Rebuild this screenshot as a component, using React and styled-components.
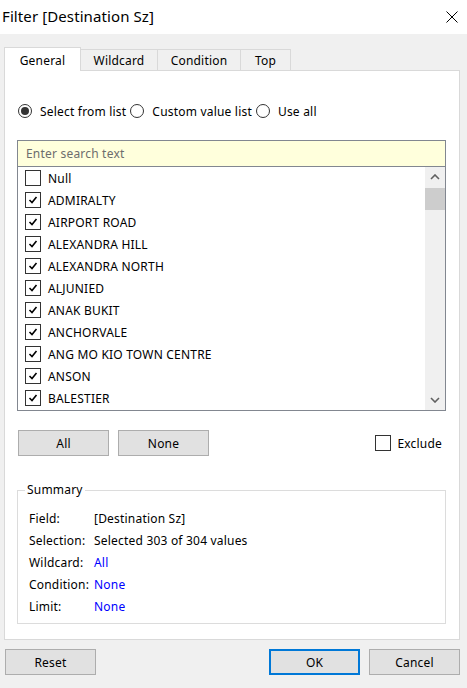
import React from "react";
import styled, { createGlobalStyle } from "styled-components";

const GlobalStyle = createGlobalStyle`
  html, body {
    margin: 0;
    padding: 0;
    background: #f0f0f0;
  }
  body {
    font-family: "Noto Sans", "Segoe UI", sans-serif;
    font-size: 12px;
    letter-spacing: 0.2px;
    color: #000;
  }
  * {
    box-sizing: border-box;
  }
`;

const Dialog = styled.div`
  width: 467px;
  height: 688px;
  display: flex;
  flex-direction: column;
  background: #f0f0f0;
  overflow: hidden;
`;

const TitleBar = styled.div`
  height: 34px;
  flex-shrink: 0;
  background: #fff;
  display: flex;
  align-items: center;
  justify-content: space-between;
  padding: 0 9px 0 2px;
`;

const Title = styled.div`
  font-size: 15px;
  letter-spacing: 0.1px;
  margin-top: -2px;
`;

const CloseButton = styled.div`
  width: 12px;
  height: 12px;
  display: flex;
`;

const TabRow = styled.div`
  display: flex;
  align-items: flex-end;
  height: 24px;
  margin: 13px 0 -1px 4px;
  position: relative;
  z-index: 1;
`;

const Tab = styled.div`
  width: ${({ $width }) => $width}px;
  height: ${({ $active }) => ($active ? 24 : 22)}px;
  margin-left: ${({ $first }) => ($first ? 0 : -1)}px;
  border: 1px solid #d9d9d9;
  border-bottom: ${({ $active }) => ($active ? "none" : "1px solid #d9d9d9")};
  background: ${({ $active }) => ($active ? "#fff" : "#f0f0f0")};
  display: flex;
  align-items: center;
  justify-content: center;
  padding-top: ${({ $active }) => ($active ? 1 : 0)}px;
  position: relative;
  z-index: ${({ $active }) => ($active ? 2 : 1)};
`;

const Panel = styled.div`
  width: 456px;
  height: 570px;
  flex-shrink: 0;
  margin-left: 4px;
  background: #fff;
  border: 1px solid #d9d9d9;
  padding: 29px 12px 0 12px;
  display: flex;
  flex-direction: column;
`;

const RadioRow = styled.div`
  display: flex;
  align-items: center;
  height: 22px;
`;

const RadioOption = styled.label`
  display: flex;
  align-items: center;
  gap: 8px;
  margin-right: 4px;
`;

const RadioCircle = styled.span`
  width: 14px;
  height: 14px;
  border-radius: 50%;
  border: 1px solid #333;
  display: flex;
  align-items: center;
  justify-content: center;
  margin-left: ${({ $first }) => ($first ? 1 : 0)}px;
  &::after {
    content: "";
    width: 8px;
    height: 8px;
    border-radius: 50%;
    background: ${({ $checked }) => ($checked ? "#333" : "transparent")};
  }
`;

const FilterBox = styled.div`
  width: 429px;
  margin-top: 18px;
  border: 1px solid #828790;
  display: flex;
  flex-direction: column;
`;

const SearchField = styled.div`
  height: 26px;
  background: #ffffdc;
  border-bottom: 1px solid #828790;
  color: #6d6d6d;
  padding-left: 8px;
  display: flex;
  align-items: center;
`;

const ListArea = styled.div`
  height: 243px;
  display: flex;
`;

const Rows = styled.div`
  flex: 1;
  overflow: hidden;
`;

const Row = styled.div`
  height: 22px;
  display: flex;
  align-items: center;
  padding-left: 7px;
  gap: 7px;
`;

const Box = styled.span`
  width: 16px;
  height: 16px;
  border: 1px solid #333;
  background: #fff;
  display: flex;
  align-items: center;
  justify-content: center;
  flex-shrink: 0;
`;

const Scrollbar = styled.div`
  width: 20px;
  background: #f0f0f0;
  display: flex;
  flex-direction: column;
  align-items: center;
`;

const ScrollArrow = styled.div`
  height: 20px;
  width: 100%;
  display: flex;
  align-items: center;
  justify-content: center;
`;

const Thumb = styled.div`
  width: 100%;
  height: 22px;
  margin-top: 1px;
  background: #cdcdcd;
`;

const Track = styled.div`
  flex: 1;
`;

const ActionRow = styled.div`
  display: flex;
  align-items: center;
  margin-top: 19px;
  padding-left: 1px;
  gap: 9px;
`;

const Button = styled.div`
  width: 91px;
  height: 26px;
  background: #e1e1e1;
  border: ${({ $default }) =>
    $default ? "2px solid #0078d7" : "1px solid #adadad"};
  display: flex;
  align-items: center;
  justify-content: center;
`;

const ExcludeOption = styled.label`
  margin-left: auto;
  margin-right: 5px;
  display: flex;
  align-items: center;
  gap: 6px;
`;

const Summary = styled.fieldset`
  margin: 26px 0 0 0;
  width: 429px;
  border: 1px solid #dcdcdc;
  padding: 9px 11px 6px 11px;
`;

const Legend = styled.legend`
  padding: 0 2px;
  margin-left: -4px;
  line-height: 16px;
`;

const SummaryRow = styled.div`
  display: grid;
  grid-template-columns: 65px 1fr;
  height: 22px;
  align-items: center;
`;

const Value = styled.span`
  color: ${({ $link }) => ($link ? "#0000ff" : "#000")};
`;

const Footer = styled.div`
  display: flex;
  align-items: center;
  margin-top: 9px;
  padding: 0 7px 0 5px;
  gap: 9px;
`;

const Spacer = styled.div`
  flex: 1;
`;

const CheckMark = () => (
  <svg width="12" height="12" viewBox="0 0 12 12">
    <polyline
      points="2.5,6 5,8.5 9.5,3"
      fill="none"
      stroke="#000"
      strokeWidth="1.6"
    />
  </svg>
);

const Chevron = ({ down }) => (
  <svg width="10" height="6" viewBox="0 0 10 6">
    <polyline
      points={down ? "1,1 5,5 9,1" : "1,5 5,1 9,5"}
      fill="none"
      stroke="#606060"
      strokeWidth="1.6"
    />
  </svg>
);

const tabs = [
  { label: "General", width: 77 },
  { label: "Wildcard", width: 78 },
  { label: "Condition", width: 84 },
  { label: "Top", width: 51 },
];

const values = [
  { name: "Null", checked: false },
  { name: "ADMIRALTY", checked: true },
  { name: "AIRPORT ROAD", checked: true },
  { name: "ALEXANDRA HILL", checked: true },
  { name: "ALEXANDRA NORTH", checked: true },
  { name: "ALJUNIED", checked: true },
  { name: "ANAK BUKIT", checked: true },
  { name: "ANCHORVALE", checked: true },
  { name: "ANG MO KIO TOWN CENTRE", checked: true },
  { name: "ANSON", checked: true },
  { name: "BALESTIER", checked: true },
];

const summary = [
  { label: "Field:", value: "[Destination Sz]" },
  { label: "Selection:", value: "Selected 303 of 304 values" },
  { label: "Wildcard:", value: "All", link: true },
  { label: "Condition:", value: "None", link: true },
  { label: "Limit:", value: "None", link: true },
];

export default function App() {
  return (
    <>
      <GlobalStyle />
      <Dialog>
        <TitleBar>
          <Title>Filter [Destination Sz]</Title>
          <CloseButton>
            <svg width="12" height="12" viewBox="0 0 12 12">
              <path d="M0.5 0.5 L11.5 11.5 M11.5 0.5 L0.5 11.5" stroke="#000" strokeWidth="1" />
            </svg>
          </CloseButton>
        </TitleBar>

        <TabRow>
          {tabs.map((t, i) => (
            <Tab key={t.label} $width={t.width} $active={i === 0} $first={i === 0}>
              {t.label}
            </Tab>
          ))}
        </TabRow>

        <Panel>
          <RadioRow>
            <RadioOption>
              <RadioCircle $checked $first />
              Select from list
            </RadioOption>
            <RadioOption>
              <RadioCircle />
              Custom value list
            </RadioOption>
            <RadioOption>
              <RadioCircle />
              Use all
            </RadioOption>
          </RadioRow>

          <FilterBox>
            <SearchField>Enter search text</SearchField>
            <ListArea>
              <Rows>
                {values.map((v) => (
                  <Row key={v.name}>
                    <Box>{v.checked && <CheckMark />}</Box>
                    {v.name}
                  </Row>
                ))}
              </Rows>
              <Scrollbar>
                <ScrollArrow>
                  <Chevron />
                </ScrollArrow>
                <Thumb />
                <Track />
                <ScrollArrow>
                  <Chevron down />
                </ScrollArrow>
              </Scrollbar>
            </ListArea>
          </FilterBox>

          <ActionRow>
            <Button>All</Button>
            <Button>None</Button>
            <ExcludeOption>
              <Box />
              Exclude
            </ExcludeOption>
          </ActionRow>

          <Summary>
            <Legend>Summary</Legend>
            {summary.map((s) => (
              <SummaryRow key={s.label}>
                <span>{s.label}</span>
                <Value $link={s.link}>{s.value}</Value>
              </SummaryRow>
            ))}
          </Summary>
        </Panel>

        <Footer>
          <Button>Reset</Button>
          <Spacer />
          <Button $default>OK</Button>
          <Button>Cancel</Button>
        </Footer>
      </Dialog>
    </>
  );
}
